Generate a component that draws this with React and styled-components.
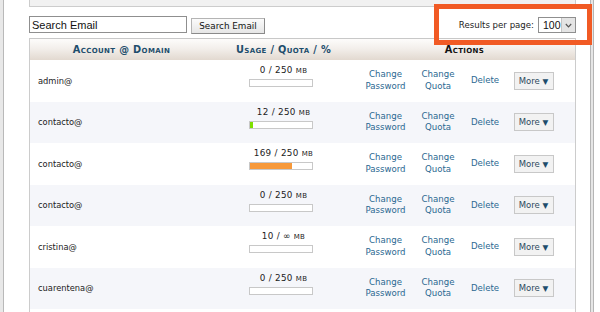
import React from 'react'
import styled, { createGlobalStyle } from 'styled-components'

const GlobalStyle = createGlobalStyle`
  body {
    margin: 0;
    background: #fff;
    font-family: "DejaVu Sans", Verdana, sans-serif;
    overflow: hidden;
  }
`

const accounts = [
  { email: 'admin@', used: '0', quota: '250', pct: 0, color: '#7fe000' },
  { email: 'contacto@', used: '12', quota: '250', pct: 4.8, color: '#7fe000' },
  { email: 'contacto@', used: '169', quota: '250', pct: 67.6, color: '#f7993a' },
  { email: 'contacto@', used: '0', quota: '250', pct: 0, color: '#7fe000' },
  { email: 'cristina@', used: '10', quota: '∞', pct: 0, color: '#7fe000' },
  { email: 'cuarentena@', used: '0', quota: '250', pct: 0, color: '#7fe000' },
]

function App() {
  return (
    <>
      <GlobalStyle />
      <Screen>
        <LeftRail />
        <Content>
          <TopPanel />
          <Toolbar>
            <SearchGroup>
              <SearchInput defaultValue="Search Email" />
              <SearchButton>Search Email</SearchButton>
            </SearchGroup>
            <PerPage>
              <PerPageLabel>Results per page:</PerPageLabel>
              <FakeSelect>
                <SelectValue>100</SelectValue>
                <SelectArrow>
                  <svg width="7" height="5" viewBox="0 0 7 5">
                    <path d="M0.8 1 L3.5 3.8 L6.2 1" fill="none" stroke="#555" strokeWidth="1.2" />
                  </svg>
                </SelectArrow>
              </FakeSelect>
            </PerPage>
          </Toolbar>
          <Table>
            <HeadRow>
              <HeadCell>Account @ Domain</HeadCell>
              <HeadCell>Usage / Quota / %</HeadCell>
              <HeadCell $dark>Actions</HeadCell>
            </HeadRow>
            {accounts.map((a, i) => (
              <Row key={i} $alt={i % 2 === 1}>
                <EmailCell>{a.email}</EmailCell>
                <UsageCell>
                  <UsageText>
                    {a.used} / {a.quota} <Unit>MB</Unit>
                  </UsageText>
                  <Bar>
                    <BarFill $color={a.color} style={{ width: `${a.pct}%` }} />
                  </Bar>
                </UsageCell>
                <LinkCell>Change<br />Password</LinkCell>
                <LinkCell>Change<br />Quota</LinkCell>
                <LinkCell>Delete</LinkCell>
                <MoreCell>
                  <MoreButton>More <Caret>▼</Caret></MoreButton>
                </MoreCell>
                <div />
              </Row>
            ))}
            <Row />
          </Table>
        </Content>
        <RightGutter>
          <RailLine />
          <RailFill />
          <RailLine />
        </RightGutter>
        <Highlight />
      </Screen>
    </>
  )
}

const Screen = styled.div`
  position: relative;
  display: flex;
  height: 312px;
  width: 600px;
  overflow: hidden;
`
const LeftRail = styled.div`
  width: 3px;
  flex: none;
  background: #e8e8e8;
  border-right: 1px solid #b9b9b9;
`
const Content = styled.div`
  margin-left: 25px;
  width: 547px;
  flex: none;
  display: flex;
  flex-direction: column;
`
const TopPanel = styled.div`
  flex: none;
  height: 6px;
  background: #f1f1f1;
  border: 1px solid #cccccc;
  border-top: none;
`
const Toolbar = styled.div`
  flex: none;
  height: 31px;
  display: flex;
  justify-content: space-between;
  align-items: flex-start;
  padding-top: 9px;
  box-sizing: border-box;
`
const SearchGroup = styled.div`
  display: flex;
  align-items: flex-start;
  gap: 4px;
`
const SearchInput = styled.input`
  width: 158px;
  height: 17px;
  box-sizing: border-box;
  border: 1px solid #8f8f8f;
  padding: 0 2px;
  font-family: "Liberation Sans", Arial, sans-serif;
  font-size: 11px;
  color: #111;
  outline: none;
`
const SearchButton = styled.button`
  margin-top: 2px;
  width: 74px;
  height: 16px;
  box-sizing: border-box;
  padding: 0;
  border: 1px solid #b4b4b4;
  border-right-color: #8a8a8a;
  border-bottom-color: #8a8a8a;
  background: linear-gradient(#fbfbfb, #e6e6e6);
  font-family: "DejaVu Sans", Verdana, sans-serif;
  font-size: 8.8px;
  color: #111;
`
const PerPage = styled.div`
  display: flex;
  align-items: center;
  gap: 4px;
  margin-top: 1px;
`
const PerPageLabel = styled.span`
  font-size: 8.6px;
  color: #222;
`
const FakeSelect = styled.div`
  width: 38px;
  height: 16px;
  box-sizing: border-box;
  border: 1px solid #8f8f8f;
  display: flex;
  background: #fff;
`
const SelectValue = styled.span`
  flex: 1;
  font-family: "Liberation Sans", Arial, sans-serif;
  font-size: 10.5px;
  line-height: 14px;
  padding-left: 4px;
  color: #111;
`
const SelectArrow = styled.span`
  width: 13px;
  background: #e4e4e4;
  border-left: 1px solid #c4c4c4;
  display: flex;
  align-items: center;
  justify-content: center;
`
const Table = styled.div`
  border-left: 1px solid #cccccc;
  border-right: 1px solid #cccccc;
  flex: 1;
  min-height: 0;
  overflow: hidden;
`
const HeadRow = styled.div`
  display: grid;
  grid-template-columns: 183px 141px 1fr;
  height: 21px;
  border-top: 1px solid #c8c8c8;
  background: linear-gradient(#fdfcfb, #f3efeb 45%, #e2d9d0);
  align-items: center;
`
const HeadCell = styled.div`
  text-align: center;
  font-weight: bold;
  font-variant: small-caps;
  font-size: 9.8px;
  letter-spacing: 0.35px;
  color: ${(p) => (p.$dark ? '#111' : '#1d4d6c')};
`
const Row = styled.div`
  display: grid;
  grid-template-columns: 183px 141px 63px 42px 52px 45px 1fr;
  height: 41.5px;
  align-items: center;
  background: ${(p) => (p.$alt ? '#f5f6fa' : '#fff')};
`
const EmailCell = styled.div`
  padding-left: 8px;
  font-size: 8.3px;
  color: #222;
`
const UsageCell = styled.div`
  display: flex;
  flex-direction: column;
  align-items: center;
  gap: 3px;
  margin-top: -9px;
`
const UsageText = styled.div`
  font-size: 8.8px;
  line-height: 10px;
  color: #222;
  letter-spacing: 0.3px;
`
const Unit = styled.span`
  font-size: 7px;
`
const Bar = styled.div`
  width: 64px;
  height: 8px;
  box-sizing: border-box;
  border: 1px solid #c8c8c8;
  background: #fff;
  margin-left: -5px;
`
const BarFill = styled.div`
  height: 100%;
  background: ${(p) => p.$color};
`
const LinkCell = styled.div`
  text-align: center;
  font-size: 8.6px;
  line-height: 11.5px;
  color: #2a6891;
`
const MoreCell = styled.div`
  display: flex;
  justify-content: center;
`
const MoreButton = styled.div`
  width: 40px;
  height: 18px;
  box-sizing: border-box;
  border: 1px solid #c8c8c8;
  background: #f2f2f2;
  font-size: 8.5px;
  line-height: 16px;
  text-align: center;
  color: #2d4a60;
`
const Caret = styled.span`
  font-size: 7.5px;
  color: #1d4d6c;
`
const RightGutter = styled.div`
  margin-left: 14px;
  display: flex;
  flex: none;
`
const RailLine = styled.div`
  width: 1px;
  background: #b5b5b5;
`
const RailFill = styled.div`
  width: 2px;
  background: #e6e6e6;
`
const Highlight = styled.div`
  position: absolute;
  left: 434px;
  top: 4px;
  width: 158px;
  height: 41px;
  box-sizing: border-box;
  border: 5px solid #f15a24;
  pointer-events: none;
`

export default App
